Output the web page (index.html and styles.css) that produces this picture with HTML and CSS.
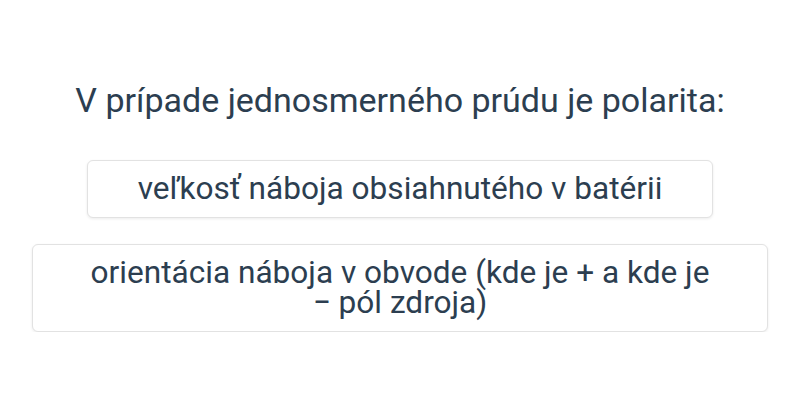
FILE: index.html
```html
<!DOCTYPE html>
<html lang="sk">
<head>
<meta charset="utf-8">
<link rel="stylesheet" href="styles.css">
</head>
<body>
<main class="quiz">
  <h1 class="question">V prípade jednosmerného prúdu je polarita:</h1>
  <div class="options">
    <div class="option">veľkosť náboja obsiahnutého v batérii</div>
    <div class="option">orientácia náboja v obvode (kde je + a kde je − pól zdroja)</div>
  </div>
</main>
</body>
</html>
```
FILE: styles.css
```css
html, body {
  margin: 0;
  padding: 0;
  background: #ffffff;
}
body {
  font-family: Roboto, "Liberation Sans", sans-serif;
  color: #2c3e50;
}
.quiz {
  display: flex;
  flex-direction: column;
  align-items: center;
  padding: 80px 32px 0;
}
.question {
  margin: 0;
  font-size: 34px;
  font-weight: 400;
  line-height: 40px;
  text-align: center;
}
.options {
  display: flex;
  flex-direction: column;
  align-items: center;
  gap: 26px;
  margin-top: 40px;
  width: 100%;
}
.option {
  box-sizing: border-box;
  max-width: 100%;
  padding: 13px 50px 13px;
  font-size: 31.6px;
  line-height: 30px;
  text-align: center;
  background: #fff;
  border: 1px solid #e2e2e2;
  border-radius: 6px;
  box-shadow: 0 1px 3px rgba(0,0,0,0.08);
}
```
